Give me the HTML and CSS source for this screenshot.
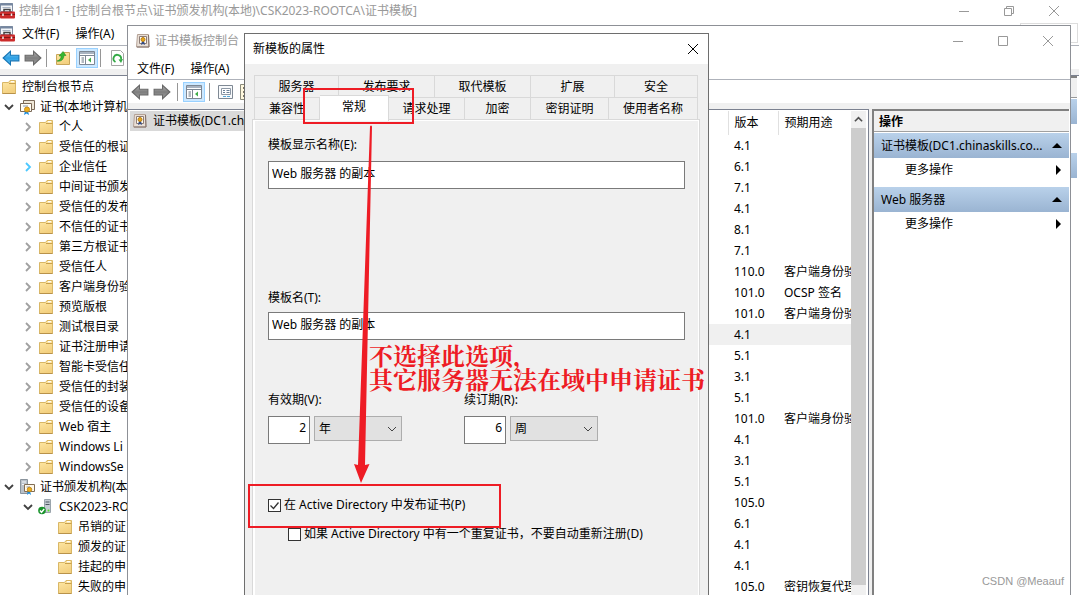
FILE: index.html
```html
<!DOCTYPE html>
<html lang="zh-CN">
<head>
<meta charset="utf-8">
<title>控制台1</title>
<link rel="stylesheet" href="styles.css">
</head>
<body>
<svg class="defs" aria-hidden="true">
  <defs>
    <linearGradient id="gold" x1="0" y1="0" x2="0.4" y2="1"><stop offset="0" stop-color="#ffe9a6"/><stop offset="1" stop-color="#f3d080"/></linearGradient>
    <linearGradient id="blue" x1="0" y1="0" x2="0" y2="1"><stop offset="0" stop-color="#8bd3f7"/><stop offset="0.5" stop-color="#2c9fe4"/><stop offset="1" stop-color="#5cc4f5"/></linearGradient>
    <linearGradient id="steel" x1="0" y1="0" x2="0" y2="1"><stop offset="0" stop-color="#b5b5b5"/><stop offset="0.5" stop-color="#7d7d7d"/><stop offset="1" stop-color="#a5a5a5"/></linearGradient>
    <symbol id="folder" viewBox="0 0 16 16"><path d="M1.500 3.500h6l1.500-2h5.500v13h-13z" fill="url(#gold)" stroke="#d9b766"/><path d="M8 4.500h6.500" stroke="#c9a04a"/><path d="M10 2.700h3" stroke="#fff" stroke-width="1.200"/><path d="M1.500 14.500h13" fill="none" stroke="#b8924a"/></symbol>
    <symbol id="toolbox" viewBox="0 0 16 16"><path d="M.5.5h12v8H.5z" fill="#f3f5f8" stroke="#7f8ba0"/><path d="M0 1.500h13" stroke="#7586a0" stroke-width="2"/><path d="M2.500 4.500h8" stroke="#a9b4c4"/><path d="M4 9V6.500h6V9" fill="none" stroke="#444" stroke-width="1.500"/><rect x="0" y="8.500" width="15" height="7" rx="1" fill="#cc2b2b"/><path d="M0 11.500h15" stroke="#861515"/><path d="M3 10.500v2.500M11.500 10.500v2.500" stroke="#eee" stroke-width="1.500"/></symbol>
    <symbol id="certstore" viewBox="0 0 16 16"><path d="M4.500 1.500h11v9h-11z" fill="#efe7d7" stroke="#7b6a58"/><path d="M1.500 4.500h11v8h-11z" fill="#fffdf5" stroke="#7b6a58"/><path d="M4 7h5" stroke="#8798b0"/><path d="m6 12-1 4 2.500-1.500L10 16l-1-4" fill="#1b8de0"/><circle cx="8" cy="10.500" r="2.500" fill="#eeb01b" stroke="#c98a1c"/></symbol>
    <symbol id="caserver" viewBox="0 0 16 16"><path d="M1.500.5h7v14h-7z" fill="#b9c1c9" stroke="#8a949d"/><path d="M3 3h4M3 5.500h4" stroke="#f4f7fa"/><path d="M5.500 5.500h10v7h-10z" fill="#fff8e8" stroke="#806d56"/><path d="M7.500 8H11" stroke="#8998ad"/><path d="m9 12-1 4 2-1.500 2 1.500-1-4" fill="#1689dc"/><circle cx="10.500" cy="10.500" r="2.200" fill="#efae19" stroke="#c28a1c"/></symbol>
    <symbol id="server-ok" viewBox="0 0 16 16"><path d="M6.500.5h6v13h-6z" fill="#c4ccd2" stroke="#9aa4ac"/><path d="M7.500 3h4M7.500 5.500h4" stroke="#4d5962"/><circle cx="10.500" cy="11.500" r="1" fill="#54e323"/><circle cx="4" cy="11.500" r="3.800" fill="#18932b"/><path d="m2 11.500 1.500 1.800L6.200 10" fill="none" stroke="#fff" stroke-width="1.400"/></symbol>
    <symbol id="template" viewBox="0 0 16 16"><path d="M2.500 1.500h11l.5 12.500H1.500z" fill="#e9dfd6" stroke="#b5a296"/><path d="M13.500 2l.5 12H2" fill="none" stroke="#81706a"/><path d="M4.500 3.500h7v7h-7z" fill="#fffdf9" stroke="#8c7c76"/><path d="M7 8 6 12l2-1 2 1-1-4" fill="#334b83"/><circle cx="8" cy="6.500" r="2" fill="#eaa719" stroke="#b77f16"/></symbol>
    <symbol id="back" viewBox="0 0 16 16"><path d="M1 8 7.500 2v3.500H15v5H7.500V14z"/></symbol>
    <symbol id="forward" viewBox="0 0 16 16"><path d="M15 8 8.500 2v3.500H1v5h7.500V14z"/></symbol>
    <symbol id="up" viewBox="0 0 16 16"><path d="M1.500 4.500h6l1-2h6v12h-13z" fill="url(#gold)" stroke="#c9a65a"/><path d="M2 11c2.500-.5 4-2.500 4.200-5H4L8 1.500 11 5.500H9c-.2 4-3 6.500-7 5.500z" fill="#36b632" stroke="#188519" stroke-width=".5"/></symbol>
    <symbol id="panes" viewBox="0 0 16 16"><path d="M.5 1.500h15v13H.5z" fill="#fff" stroke="#7d8794"/><path d="M1 3h14" stroke="#a8b3c1" stroke-width="2"/><path d="M.5 5.500h15M6.500 6v8" stroke="#7d8794"/><path d="M2.500 8H5M2.500 10H5M2.500 12H5" stroke="#697482"/><path d="m12 7.500-3 2.500 3 2.500z" fill="#3fae49"/></symbol>
    <symbol id="refresh" viewBox="0 0 16 16"><path d="M2.500.5h9l3 3v12h-12z" fill="#fff" stroke="#a5a5a5"/><path d="M6.500 12A3.800 3.800 0 1 1 12 9.500" fill="none" stroke="#32a944" stroke-width="1.800"/><path d="m9.500 9.500 4.500-.5-2 4z" fill="#32a944"/></symbol>
    <symbol id="props" viewBox="0 0 16 16"><path d="M.5 1.500h14v13H.5z" fill="#f8fafc" stroke="#7f8994"/><path d="M3.500 4.500h9v6h-9z" fill="#fff" stroke="#8d98a5"/><path d="M5 6.500h2M8.500 6.500h3M5 8.500h2M8.500 8.500h3" stroke="#697f97"/><path d="M5 12.500h3M9 12.500h3" stroke="#55a8d8"/></symbol>
    <symbol id="list" viewBox="0 0 16 16"><path d="M.5.5h13v15H.5z" fill="#fff8de" stroke="#8b8b7a"/><path d="M3 4h8M3 8h8M3 12h8" stroke="#504c42" stroke-width="1.500"/></symbol>
    <symbol id="close" viewBox="0 0 12 12"><path d="m1 1 10 10M11 1 1 11" fill="none" stroke="currentColor"/></symbol>
    <symbol id="minimize" viewBox="0 0 12 12"><path d="M1 6.500h10" stroke="currentColor"/></symbol>
    <symbol id="maximize" viewBox="0 0 12 12"><path d="M1.500 1.500h9v9h-9z" fill="none" stroke="currentColor"/></symbol>
    <symbol id="restore" viewBox="0 0 12 12"><path d="M1.500 3.500h7v7h-7zM3.500 3.500v-2h7v7h-2" fill="none" stroke="currentColor"/></symbol>
    <symbol id="chev" viewBox="0 0 10 10"><path d="m3 1 4 4-4 4" fill="none" stroke="currentColor" stroke-width="1.800"/></symbol>
    <symbol id="chev-down" viewBox="0 0 10 10"><path d="m1 3 4 4 4-4" fill="none" stroke="currentColor" stroke-width="1.800"/></symbol>
  </defs>
</svg>

<main class="desktop">
  <section class="console">
    <header class="titlebar"><svg class="ico"><use href="#toolbox"/></svg><h1 class="caption">控制台1 - [控制台根节点\证书颁发机构(本地)\CSK2023-ROOTCA\证书模板]</h1>
      <div class="controls"><button aria-label="最小化"><svg><use href="#minimize"/></svg></button><button aria-label="还原"><svg><use href="#restore"/></svg></button><button aria-label="关闭"><svg><use href="#close"/></svg></button></div></header>
    <nav class="menubar"><svg class="ico"><use href="#toolbox"/></svg><button>文件(F)</button><button>操作(A)</button><span class="mdi"></span></nav>
    <div class="toolbar">
      <button class="tool nav-blue" aria-label="后退"><svg><use href="#back"/></svg></button><button class="tool nav-grey" aria-label="前进"><svg><use href="#forward"/></svg></button><i class="sep"></i>
      <button class="tool" aria-label="上移"><svg><use href="#up"/></svg></button><button class="tool on" aria-label="显示控制台树"><svg><use href="#panes"/></svg></button><i class="sep"></i><button class="tool" aria-label="刷新"><svg><use href="#refresh"/></svg></button>
    </div>
    <div class="console-body">
      <ul class="tree">
        <li class="root"><svg class="ico"><use href="#folder"/></svg>控制台根节点</li>
        <li class="l1"><svg class="chev open"><use href="#chev-down"/></svg><svg class="ico"><use href="#certstore"/></svg>证书(本地计算机)</li>
        <li class="l2"><svg class="chev"><use href="#chev"/></svg><svg class="ico"><use href="#folder"/></svg>个人</li>
        <li class="l2"><svg class="chev"><use href="#chev"/></svg><svg class="ico"><use href="#folder"/></svg>受信任的根证</li>
        <li class="l2"><svg class="chev hot"><use href="#chev"/></svg><svg class="ico"><use href="#folder"/></svg>企业信任</li>
        <li class="l2"><svg class="chev"><use href="#chev"/></svg><svg class="ico"><use href="#folder"/></svg>中间证书颁发</li>
        <li class="l2"><svg class="chev"><use href="#chev"/></svg><svg class="ico"><use href="#folder"/></svg>受信任的发布</li>
        <li class="l2"><svg class="chev"><use href="#chev"/></svg><svg class="ico"><use href="#folder"/></svg>不信任的证书</li>
        <li class="l2"><svg class="chev"><use href="#chev"/></svg><svg class="ico"><use href="#folder"/></svg>第三方根证书</li>
        <li class="l2"><svg class="chev"><use href="#chev"/></svg><svg class="ico"><use href="#folder"/></svg>受信任人</li>
        <li class="l2"><svg class="chev"><use href="#chev"/></svg><svg class="ico"><use href="#folder"/></svg>客户端身份验</li>
        <li class="l2"><svg class="chev"><use href="#chev"/></svg><svg class="ico"><use href="#folder"/></svg>预览版根</li>
        <li class="l2"><svg class="chev"><use href="#chev"/></svg><svg class="ico"><use href="#folder"/></svg>测试根目录</li>
        <li class="l2"><svg class="chev"><use href="#chev"/></svg><svg class="ico"><use href="#folder"/></svg>证书注册申请</li>
        <li class="l2"><svg class="chev"><use href="#chev"/></svg><svg class="ico"><use href="#folder"/></svg>智能卡受信任</li>
        <li class="l2"><svg class="chev"><use href="#chev"/></svg><svg class="ico"><use href="#folder"/></svg>受信任的封装</li>
        <li class="l2"><svg class="chev"><use href="#chev"/></svg><svg class="ico"><use href="#folder"/></svg>受信任的设备</li>
        <li class="l2"><svg class="chev"><use href="#chev"/></svg><svg class="ico"><use href="#folder"/></svg>Web 宿主</li>
        <li class="l2"><svg class="chev"><use href="#chev"/></svg><svg class="ico"><use href="#folder"/></svg>Windows Li</li>
        <li class="l2"><svg class="chev"><use href="#chev"/></svg><svg class="ico"><use href="#folder"/></svg>WindowsSe</li>
        <li class="l1"><svg class="chev open"><use href="#chev-down"/></svg><svg class="ico"><use href="#caserver"/></svg>证书颁发机构(本</li>
        <li class="l2"><svg class="chev open"><use href="#chev-down"/></svg><svg class="ico"><use href="#server-ok"/></svg>CSK2023-RO</li>
        <li class="l3"><svg class="ico"><use href="#folder"/></svg>吊销的证</li>
        <li class="l3"><svg class="ico"><use href="#folder"/></svg>颁发的证</li>
        <li class="l3"><svg class="ico"><use href="#folder"/></svg>挂起的申</li>
        <li class="l3"><svg class="ico"><use href="#folder"/></svg>失败的申</li>
      </ul>
      <div class="rail"><div class="rail-head"></div><div class="rail-bar"></div><div class="rail-bar"></div></div>
    </div>
  </section>

  <section class="templates">
    <header class="titlebar"><svg class="ico"><use href="#template"/></svg><h2 class="caption">证书模板控制台</h2>
      <div class="controls"><button aria-label="最小化"><svg><use href="#minimize"/></svg></button><button aria-label="最大化"><svg><use href="#maximize"/></svg></button><button aria-label="关闭"><svg><use href="#close"/></svg></button></div></header>
    <nav class="menubar"><button>文件(F)</button><button>操作(A)</button></nav>
    <div class="toolbar">
      <button class="tool nav-grey" aria-label="后退"><svg><use href="#back"/></svg></button><button class="tool nav-grey" aria-label="前进"><svg><use href="#forward"/></svg></button><i class="sep"></i>
      <button class="tool on" aria-label="显示控制台树"><svg><use href="#panes"/></svg></button><i class="sep"></i><button class="tool" aria-label="属性"><svg><use href="#props"/></svg></button><button class="tool" aria-label="列表"><svg><use href="#list"/></svg></button>
    </div>
    <div class="panes">
      <div class="scope"><div class="scope-item"><svg class="ico"><use href="#template"/></svg>证书模板(DC1.ch</div></div>
      <div class="result">
        <table class="list">
          <colgroup><col class="c-name"><col class="c-version"><col></colgroup>
          <thead><tr><th></th><th>版本</th><th>预期用途</th></tr></thead>
          <tbody>
            <tr><td></td><td>4.1</td><td></td></tr>
            <tr><td></td><td>6.1</td><td></td></tr>
            <tr><td></td><td>7.1</td><td></td></tr>
            <tr><td></td><td>4.1</td><td></td></tr>
            <tr><td></td><td>8.1</td><td></td></tr>
            <tr><td></td><td>7.1</td><td></td></tr>
            <tr><td></td><td>110.0</td><td>客户端身份验</td></tr>
            <tr><td></td><td>101.0</td><td>OCSP 签名</td></tr>
            <tr><td></td><td>101.0</td><td>客户端身份验</td></tr>
            <tr class="sel"><td></td><td>4.1</td><td></td></tr>
            <tr><td></td><td>5.1</td><td></td></tr>
            <tr><td></td><td>3.1</td><td></td></tr>
            <tr><td></td><td>5.1</td><td></td></tr>
            <tr><td></td><td>101.0</td><td>客户端身份验</td></tr>
            <tr><td></td><td>4.1</td><td></td></tr>
            <tr><td></td><td>3.1</td><td></td></tr>
            <tr><td></td><td>5.1</td><td></td></tr>
            <tr><td></td><td>105.0</td><td></td></tr>
            <tr><td></td><td>6.1</td><td></td></tr>
            <tr><td></td><td>4.1</td><td></td></tr>
            <tr><td></td><td>4.1</td><td></td></tr>
            <tr><td></td><td>105.0</td><td>密钥恢复代理</td></tr>
          </tbody>
        </table>
        <div class="scroll"><button aria-label="向上滚动"><svg><use href="#chev-down"/></svg></button><div class="thumb"></div></div>
      </div>
      <aside class="actions">
        <h3>操作</h3>
        <button class="group"><span>证书模板(DC1.chinaskills.co...</span><i class="tri-up"></i></button>
        <button class="more"><span>更多操作</span><i class="tri-right"></i></button>
        <button class="group"><span>Web 服务器</span><i class="tri-up"></i></button>
        <button class="more"><span>更多操作</span><i class="tri-right"></i></button>
      </aside>
    </div>
  </section>

  <section class="dialog" role="dialog" aria-label="新模板的属性">
    <header class="dialog-title"><h2>新模板的属性</h2><button aria-label="关闭"><svg><use href="#close"/></svg></button></header>
    <div class="dialog-body">
      <div class="tabs" role="tablist">
        <div class="tabrow first"><button role="tab">服务器</button><button role="tab">发布要求</button><button role="tab">取代模板</button><button role="tab">扩展</button><button role="tab">安全</button></div>
        <div class="tabrow second"><button role="tab">兼容性</button><button role="tab" class="active" aria-selected="true">常规</button><button role="tab">请求处理</button><button role="tab">加密</button><button role="tab">密钥证明</button><button role="tab">使用者名称</button></div>
      </div>
      <form class="panel">
        <div class="field display"><label for="display">模板显示名称(E):</label><input id="display" type="text" value="Web 服务器 的副本"></div>
        <div class="field name"><label for="name">模板名(T):</label><input id="name" type="text" value="Web 服务器 的副本"></div>
        <div class="periods">
          <div class="field"><label for="valid">有效期(V):</label><div class="pair"><input id="valid" type="text" value="2"><select aria-label="有效期单位"><option>年</option></select></div></div>
          <div class="field"><label for="renew">续订期(R):</label><div class="pair"><input id="renew" type="text" value="6"><select aria-label="续订期单位"><option>周</option></select></div></div>
        </div>
        <label class="check"><input type="checkbox" checked>在 Active Directory 中发布证书(P)</label>
        <label class="check sub"><input type="checkbox">如果 Active Directory 中有一个重复证书，不要自动重新注册(D)</label>
      </form>
    </div>
  </section>

  <svg class="marks" aria-hidden="true">
    <rect x="304" y="89" width="109" height="34"/><rect x="249" y="485" width="251" height="42"/>
    <path d="M370 126.500q1-2 2 0L365 465l4.500-1L361 483l-7-19 4 1z"/>
  </svg>
  <p class="note">不选择此选项，<br>其它服务器无法在域中申请证书</p>
  <span class="credit">CSDN @Meaauf</span>
</main>
</body>
</html>
```
FILE: styles.css
```css
* { box-sizing: border-box; }
body { margin: 0; overflow: hidden; background: #fff; color: #000; font: 12px/16px "Noto Sans", "Noto Sans CJK SC", sans-serif; }
h1, h2, h3, p, ul { margin: 0; padding: 0; font: inherit; }
button { margin: 0; padding: 0; border: 0; background: none; color: inherit; font: inherit; white-space: nowrap; }
svg { display: block; }
.defs { position: absolute; width: 0; height: 0; }
.desktop { position: relative; height: 100vh; overflow: hidden; }
.ico { width: 16px; height: 16px; flex: none; }

.titlebar { display: flex; align-items: center; color: #999; }
.caption { white-space: nowrap; }
.controls { display: flex; gap: 33px; margin-left: auto; }
.controls svg { width: 12px; height: 12px; }
.menubar { display: flex; align-items: center; gap: 16px; }
.toolbar { display: flex; align-items: center; height: 30px; border-top: 1px solid #aeb2ba; border-bottom: 6px solid #f0f0f0; }
.tool { display: grid; place-items: center; width: 22px; height: 20px; flex: none; }
.tool svg { width: 16px; height: 16px; }
.tool.on { background: #cce8ff; border: 1px solid #99d1ff; }
.tool.nav-blue svg, .tool.nav-grey svg { width: 18px; height: 18px; }
.nav-blue { fill: url(#blue); stroke: #1775b5; }
.nav-grey { fill: url(#steel); stroke: #696969; }
.sep { width: 1px; height: 18px; margin: 0 5px 0 2px; background: #969696; flex: none; }

.console { display: flex; flex-direction: column; height: 100%; }
.console .titlebar { height: 21px; gap: 3px; padding-right: 19px; }
.console .menubar { height: 24px; padding-top: 2px; }
.console .menubar .ico { margin-right: -10px; }
.mdi { align-self: stretch; width: 58px; margin: 0 1px 2px auto; border: 1px solid #ddd; }
.console .tool.on { margin-left: 2px; }
.console-body { display: flex; flex: 1; border-top: 1px solid #7b8190; min-height: 0; }
.tree { flex: 1; padding-top: 1px; list-style: none; }
.tree li { display: flex; align-items: center; gap: 5px; height: 20px; white-space: nowrap; }
.tree .root { padding-left: 1px; }
.tree .l1 { padding-left: 4px; }
.tree .l2 { padding-left: 23px; }
.tree .l3 { padding-left: 57px; }
.chev { width: 10px; height: 10px; color: #a0a0a0; flex: none; }
.chev.open { color: #404040; }
.chev.hot { color: #4cc8ff; }
.rail { width: 100px; margin-right: 2px; border-top: 2px solid #808080; }
.rail-head { height: 20px; background: #f0f0f0; border-bottom: 1px solid #999; }
.rail-bar { height: 25px; margin: 1px 0 29px; background: linear-gradient(#b9d1ea, #9ab4d2); }

.templates { position: absolute; inset: 25px 8px 0 127px; display: flex; flex-direction: column; background: #fff; border: 1px solid #8d9096; border-bottom: 0; }
.templates .titlebar { height: 30px; gap: 4px; padding: 0 16px 0 7px; }
.templates .menubar { height: 23px; padding: 2px 0 0 9px; }
.templates .toolbar { padding-left: 1px; }
.templates .sep { margin: 0 5px 0 4px; }
.panes { display: flex; flex: 1; min-height: 0; padding-right: 1px; }
.scope { flex: 1; padding: 1px 2px; border-top: 1px solid #7b8190; }
.scope-item { display: flex; align-items: center; gap: 5px; height: 20px; padding-left: 2px; background: #d9d9d9; white-space: nowrap; }
.result { display: flex; flex: none; width: 163px; border: 1px solid #7b8190; border-width: 1px 1px 0 0; padding-top: 1px; overflow: hidden; }
.list { table-layout: fixed; width: 145px; border-collapse: collapse; align-self: flex-start; }
.c-name { width: 22px; }
.c-version { width: 50px; }
.list th, .list td { height: 21px; padding: 0 0 0 6px; font-weight: 400; text-align: left; white-space: nowrap; overflow: hidden; }
.list th { height: 24px; border-right: 1px solid #e0e0e0; }
.list th:last-child { border-right: 0; }
.sel { background: #f0f0f0; }
.scroll { display: flex; flex-direction: column; width: 15px; padding-bottom: 10px; background: #f0f0f0; }
.scroll button { display: grid; place-items: center; height: 17px; color: #505050; transform: rotate(180deg); }
.scroll svg { width: 9px; height: 9px; }
.thumb { flex: 1; background: #cdcdcd; }
.actions { display: flex; flex-direction: column; flex: none; width: 197px; margin-left: 3px; border: 2px solid #808080; border-width: 2px 0 0 2px; box-shadow: -3px 0 #f0f0f0; }
.actions h3 { height: 21px; padding: 3px 5px 1px; background: #f0f0f0; border-bottom: 1px solid #a0a0a0; font-weight: 700; }
.actions button { display: flex; align-items: center; justify-content: space-between; text-align: left; }
.group { height: 25px; margin-top: 1px; }
.actions .group { padding: 0 7px; background: linear-gradient(#b9d1ea, #9ab4d2); }
.actions .more { height: 24px; margin-bottom: 4px; padding: 0 8px 0 31px; }
.tri-up { border: 5px solid transparent; border-top: 0; border-bottom-color: #000; }
.tri-right { border: 5px solid transparent; border-right: 0; border-left-color: #000; }

.dialog { position: absolute; top: 33px; bottom: 0; left: 244px; width: 43.1%; display: flex; flex-direction: column; background: #f0f0f0; border: 1px solid #6e6e6e; border-bottom: 0; }
.dialog-title { display: flex; align-items: center; justify-content: space-between; height: 30px; padding: 0 9px 0 8px; background: #fff; }
.dialog-title svg { width: 12px; height: 12px; }
.dialog-body { display: flex; flex: 1; flex-direction: column; padding: 11px 8px 0 7px; }
.tabs { padding: 0 2px; }
.tabrow { display: grid; height: 22px; border-left: 1px solid #d9d9d9; }
.first { grid-template-columns: 84fr 96fr 96fr 84fr 83fr; }
.second { grid-template-columns: 65fr 69fr 76fr 66fr 78fr 89fr; }
.tabrow button { border: 1px solid #d9d9d9; border-width: 1px 1px 0 0; }
.tabrow .active { position: relative; margin: -2px 0; padding-bottom: 3px; background: #fff; }
.panel { flex: 1; padding: 17px 14px 0 15px; border: 1px solid #d9d9d9; border-bottom: 0; box-shadow: inset 2px 1px #fff, inset -1px 0 #fff; }
.field { display: flex; flex-direction: column; gap: 8px; }
.field input { width: 100%; height: 28px; margin: 0; padding: 0 3px 5px; border: 1px solid #7a7a7a; border-radius: 0; background: #fff; color: #000; font: inherit; }
.name { margin-top: 101px; gap: 6px; }
.periods { display: flex; gap: 62px; margin-top: 52px; }
.pair { display: flex; gap: 4px; }
.pair input { width: 42px; text-align: right; }
.pair select { width: 88px; height: 25px; padding: 0 4px; border: 1px solid #adadad; border-radius: 0; color: #000; font: inherit; appearance: none; background: #e1e1e1 url("data:image/svg+xml,%3Csvg xmlns='http://www.w3.org/2000/svg' width='10' height='6'%3E%3Cpath d='M1 1l4 4 4-4' fill='none' stroke='%23444'/%3E%3C/svg%3E") no-repeat right 4px center; }
.check { display: flex; align-items: center; gap: 3px; margin-top: 53px; white-space: nowrap; }
.check.sub { margin: 13px 0 0 20px; }
.check input { appearance: none; width: 13px; height: 13px; margin: 0; border: 1px solid #333; background: #fff; }
.check input:checked { background: #fff url("data:image/svg+xml,%3Csvg xmlns='http://www.w3.org/2000/svg' width='11' height='11'%3E%3Cpath d='M1.500 5.500l3 3 5-6' fill='none' stroke='%23333' stroke-width='1.300'/%3E%3C/svg%3E") center no-repeat; }

.marks { position: absolute; inset: 0; width: 100%; height: 100%; pointer-events: none; }
.marks rect { fill: none; stroke: #ee1c25; stroke-width: 2; }
.marks path { fill: #ee1c25; }
.note { position: absolute; top: 343px; left: 369px; color: #ee1c25; font: 700 24px/24px "Noto Serif CJK SC", "Noto Sans CJK SC", serif; white-space: nowrap; }
.credit { position: absolute; right: 15px; bottom: 6px; color: #999; font: 11px/16px "Liberation Sans", sans-serif; }
```
